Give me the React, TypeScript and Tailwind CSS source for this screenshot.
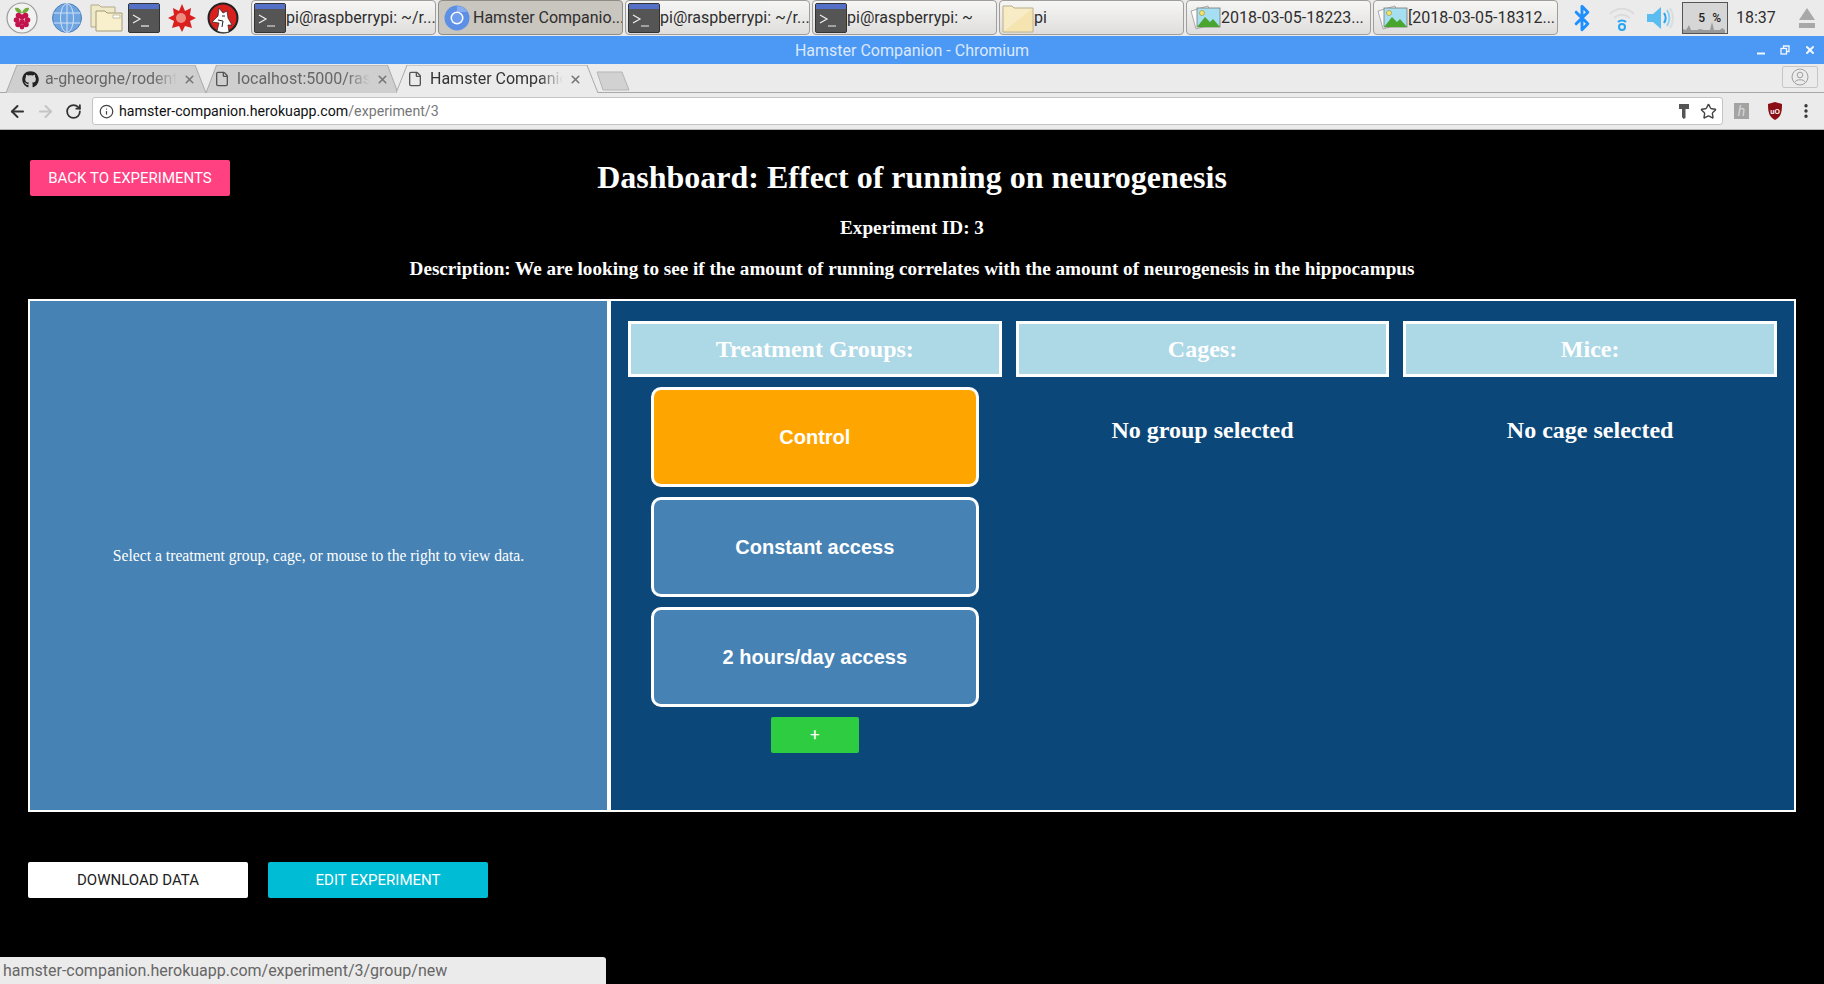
import { ArrowLeft, ArrowRight, Bluetooth, EllipsisVertical, File, Info, RotateCw, Star, X } from 'lucide-react'
import { FaGithub } from 'react-icons/fa'

function RaspberryIcon() {
  return (
    <svg width="32" height="32" viewBox="0 0 32 32">
      <circle cx="16" cy="16" r="15" fill="#f2f2f2" stroke="#9a9a9a" strokeWidth="1.2" />
      <path d="M16 11c-1-4-4-6-7-5 0 3 3 6 7 5zM16 11c1-4 4-6 7-5 0 3-3 6-7 5z" fill="#6fae3c" />
      <g fill="#c2134d">
        <circle cx="12.5" cy="13.5" r="2.8" />
        <circle cx="19.5" cy="13.5" r="2.8" />
        <circle cx="16" cy="15" r="2.8" />
        <circle cx="10.5" cy="18" r="2.8" />
        <circle cx="21.5" cy="18" r="2.8" />
        <circle cx="16" cy="20" r="2.8" />
        <circle cx="12" cy="22.5" r="2.8" />
        <circle cx="20" cy="22.5" r="2.8" />
        <circle cx="16" cy="25" r="2.4" />
      </g>
    </svg>
  )
}

function GlobeIcon() {
  return (
    <svg width="32" height="32" viewBox="0 0 32 32">
      <circle cx="16" cy="16" r="14.5" fill="#6ea4e0" stroke="#4c7fba" />
      <g fill="none" stroke="#cfe2f7" strokeWidth="1">
        <ellipse cx="16" cy="16" rx="6.5" ry="14.5" />
        <path d="M16 1.5v29M2.5 11h27M2.5 21h27" />
      </g>
    </svg>
  )
}

function FolderIcon() {
  return (
    <svg width="34" height="32" viewBox="0 0 34 32">
      <path d="M1 3h8l2 2h14v20H1z" fill="#f0e9c8" stroke="#b3ab8a" />
      <path d="M6 9h9l2 2h15v18H6z" fill="#f8efcc" stroke="#a39a78" />
      <rect x="23" y="13" width="7" height="3" fill="#fff" stroke="#a39a78" strokeWidth="0.6" />
    </svg>
  )
}

function TerminalIcon() {
  return (
    <svg width="32" height="32" viewBox="0 0 32 32">
      <rect x="0.5" y="1.5" width="31" height="29" rx="1.5" fill="#555" stroke="#333" />
      <rect x="1" y="2" width="30" height="5" fill="#5470c6" />
      <path d="M5 13l7 4-7 4" fill="none" stroke="#eee" strokeWidth="1.2" />
      <path d="M13 24h8" stroke="#eee" strokeWidth="1.2" />
    </svg>
  )
}

function WolframIcon() {
  return (
    <svg width="30" height="30" viewBox="0 0 30 30">
      <path
        d="M15 1l3 7 6-3-1 7 6 3-6 3 2 7-7-2-3 6-3-6-7 2 2-7-6-3 6-3-1-7 6 3z"
        fill="#d9201f"
      />
      <circle cx="14" cy="15" r="5" fill="#ee8a80" />
    </svg>
  )
}

function WolfIcon() {
  return (
    <svg width="32" height="32" viewBox="0 0 32 32">
      <circle cx="16" cy="16" r="14.5" fill="#d8201f" stroke="#222" strokeWidth="2" />
      <path
        d="M12 6l4 5 4-2 1 7 4 7-4 0 1 7c-4 1-8 1-12-1l2-8-7-1 6-6z"
        fill="#fff"
        stroke="#222"
        strokeWidth="0.7"
      />
      <path d="M11 18l5 1-1 6M15 14l3 0" fill="none" stroke="#222" strokeWidth="1" />
    </svg>
  )
}

function ChromiumIcon() {
  return (
    <svg width="26" height="26" viewBox="0 0 26 26">
      <circle cx="13" cy="13" r="12.5" fill="#5c8fe6" />
      <path d="M13 1a12 12 0 0 1 10.4 6H13z" fill="#88aef0" />
      <circle cx="13" cy="13" r="6.5" fill="#fff" />
      <circle cx="13" cy="13" r="5" fill="#6f9cec" />
    </svg>
  )
}

function ImageIcon() {
  return (
    <svg width="32" height="28" viewBox="0 0 32 28">
      <path d="M2 7l17-5 5 18-17 5z" fill="#fafafa" stroke="#999" strokeWidth="0.8" />
      <rect x="8" y="4" width="23" height="19" fill="#a6dff2" stroke="#777" strokeWidth="0.8" />
      <circle cx="13" cy="9" r="2.5" fill="#f5e66a" stroke="#8c8a3c" strokeWidth="0.6" />
      <path d="M8 23l8-10 5 5 3-3 7 8z" fill="#4aa52e" />
    </svg>
  )
}

function TaskButton({ icon, label, active }: { icon: React.ReactNode; label: string; active?: boolean }) {
  return (
    <div
      className={
        active
          ? 'flex w-[185px] h-[35px] items-center overflow-hidden rounded-[4px] border border-[#8f8c86] bg-[#c9c5bf] pl-[1px]'
          : 'flex w-[185px] h-[35px] items-center overflow-hidden rounded-[4px] border border-[#a09e9a] bg-gradient-to-b from-[#f6f6f5] to-[#dfdedc] pl-[1px]'
      }
    >
      <span className="flex w-[33px] shrink-0 justify-center">{icon}</span>
      <span className="whitespace-nowrap text-[16px] text-[#2e2e2e]">{label}</span>
    </div>
  )
}

function BrowserTab({ icon, label, active, className, iconClass, closeClass }: {
  icon: React.ReactNode
  label: string
  active?: boolean
  className: string
  iconClass: string
  closeClass: string
}) {
  return (
    <div className={`relative flex h-[28px] items-center ${className}`}>
      <svg className="absolute inset-0 h-full w-full" viewBox="0 0 200 28" preserveAspectRatio="none">
        <path
          d="M0 28L11 0H189L200 28"
          fill={active ? '#ebebeb' : '#cfcfcf'}
          stroke="#a9a9a9"
          strokeWidth="1"
          vectorEffect="non-scaling-stroke"
        />
      </svg>
      <span className={`relative flex w-[20px] shrink-0 justify-center ${iconClass}`}>{icon}</span>
      <span
        className={`relative ml-[5px] flex-1 overflow-hidden whitespace-nowrap text-[16px] [mask-image:linear-gradient(to_right,black_82%,transparent)] ${
          active ? 'text-[#333]' : 'text-[#666]'
        }`}
      >
        {label}
      </span>
      <X className={`relative ml-[6px] shrink-0 text-[#777] ${closeClass}`} size={13} strokeWidth={3} />
    </div>
  )
}

function GroupButton({ label, selected }: { label: string; selected?: boolean }) {
  return (
    <button
      className={`h-[100px] w-[328px] rounded-[10px] border-[3px] border-white font-['Liberation_Sans',sans-serif] text-[20px] font-bold text-white ${
        selected ? 'bg-[#ffa500]' : 'bg-[#4682b4]'
      }`}
    >
      {label}
    </button>
  )
}

function ColumnHeader({ label }: { label: string }) {
  return (
    <div className="flex h-[56px] items-center justify-center border-[3px] border-white bg-[#add8e6] text-[24px] font-bold text-white">
      {label}
    </div>
  )
}

export default function App() {
  return (
    <div className="relative flex h-[984px] w-[1824px] flex-col overflow-hidden bg-black font-['Liberation_Serif',serif]">

      {/* Desktop panel */}
      <div className="flex h-[36px] shrink-0 items-start bg-[#ebebeb] font-['Roboto',sans-serif]">
        <div className="flex h-[36px] w-[251px] shrink-0 items-center pl-[6px]">
          <span className="w-[45px]"><RaspberryIcon /></span>
          <span className="w-[39px]"><GlobeIcon /></span>
          <span className="w-[38px]"><FolderIcon /></span>
          <span className="w-[39px]"><TerminalIcon /></span>
          <span className="w-[40px]"><WolframIcon /></span>
          <WolfIcon />
        </div>
        <div className="flex gap-[2px]">
          <TaskButton icon={<TerminalIcon />} label="pi@raspberrypi: ~/r..." />
          <TaskButton active icon={<ChromiumIcon />} label="Hamster Companio..." />
          <TaskButton icon={<TerminalIcon />} label="pi@raspberrypi: ~/r..." />
          <TaskButton icon={<TerminalIcon />} label="pi@raspberrypi: ~" />
          <TaskButton
            icon={
              <svg width="32" height="30" viewBox="0 0 32 30">
                <path d="M1 3h9l2 2h19v24H1z" fill="#f7ecc6" stroke="#b9ae87" />
                <path d="M2 28L30 6v22z" fill="#f5e4b0" />
              </svg>
            }
            label="pi"
          />
          <TaskButton icon={<ImageIcon />} label="2018-03-05-18223..." />
          <TaskButton icon={<ImageIcon />} label="[2018-03-05-18312..." />
        </div>
        <div className="flex h-[36px] flex-1 items-center pl-[10px]">
          <Bluetooth className="shrink-0 text-[#1e8fff]" size={28} strokeWidth={2.5} />
          <svg className="ml-[12px] shrink-0" width="28" height="28" viewBox="0 0 28 28" fill="none">
            <path d="M2 10c7-7 17-7 24 0M6 14c5-4 11-4 16 0" stroke="#dcdcdc" strokeWidth="2" />
            <path d="M10 18c2-2 6-2 8 0" stroke="#27a4f2" strokeWidth="2" />
            <circle cx="14" cy="23" r="3" stroke="#27a4f2" strokeWidth="2" />
          </svg>
          <svg className="ml-[10px] shrink-0" width="28" height="28" viewBox="0 0 28 28" fill="none">
            <path d="M1 10h6l8-7v22l-8-7H1z" fill="#5bbcf2" />
            <path d="M18 9c2 3 2 7 0 10" stroke="#27a4f2" strokeWidth="2" />
            <path d="M21 6c3 5 3 11 0 16" stroke="#8fd0f5" strokeWidth="2" />
            <path d="M24 4c4 6 4 14 0 20" stroke="#dcdcdc" strokeWidth="2" />
          </svg>
          <div className="relative ml-[8px] h-[32px] w-[46px] shrink-0 border border-[#555] bg-[#d6d6d6]">
            <span className="absolute right-[4px] top-[6px] text-[12px] font-medium tracking-[2px] text-[#222]">5 %</span>
            <svg className="absolute bottom-0 left-0" width="44" height="12" viewBox="0 0 44 12">
              <path d="M0 12V8l3 1 3-5 2 5h6l3-1 4 1h6l2-8 2 8h6l2-2 3 2v3z" fill="#9a9a9a" />
            </svg>
          </div>
          <span className="ml-[8px] text-[16px] text-[#2e2e2e]">18:37</span>
          <svg className="ml-[22px] shrink-0" width="18" height="22" viewBox="0 0 18 22">
            <path d="M9 1l8 12H1z" fill="#a8a8a8" />
            <rect x="1" y="16" width="16" height="5" fill="#a8a8a8" />
          </svg>
        </div>
      </div>

      {/* Window title */}
      <div className="relative flex h-[28px] shrink-0 items-center justify-center bg-[#4c98f5] pt-[1px] font-['Roboto',sans-serif] text-[16px] text-[#dbe9fc]">
        Hamster Companion - Chromium
        <div className="absolute right-[8px] top-0 flex h-[28px] items-center gap-[14px]">
          <svg width="10" height="10" viewBox="0 0 10 10"><path d="M1 8.5h8" stroke="#f2f7fe" strokeWidth="2" /></svg>
          <svg width="10" height="10" viewBox="0 0 10 10" fill="none" stroke="#f2f7fe" strokeWidth="1.3">
            <rect x="1" y="3.5" width="5.5" height="5.5" />
            <path d="M3.5 3.5V1H9v5.5H6.5" />
          </svg>
          <X className="text-[#f2f7fe]" size={12} strokeWidth={4} />
        </div>
      </div>

      {/* Tab strip */}
      <div className="relative flex h-[29px] shrink-0 border-b border-[#a9a9a9] bg-[#ebebeb] pl-[6px] font-['Roboto',sans-serif]">
        <BrowserTab
          className="w-[200px] mt-[1px]"
          iconClass="ml-[14px]"
          closeClass="mr-[10px]"
          icon={<FaGithub className="text-[#222]" size={17} />}
          label="a-gheorghe/rodent-tracker"
        />
        <BrowserTab
          className="w-[192px] mt-[1px]"
          iconClass="ml-[6px]"
          closeClass="mr-[9px]"
          icon={<File className="text-[#555]" size={16} />}
          label="localhost:5000/raspberry"
        />
        <BrowserTab
          active
          className="-ml-[2px] w-[202px] mt-[1px]"
          iconClass="ml-[9px]"
          closeClass="mr-[16px]"
          icon={<File className="text-[#555]" size={16} />}
          label="Hamster Companion"
        />
        <svg className="mt-[7px] -ml-[2px]" width="34" height="20" viewBox="0 0 34 20">
          <path d="M1 1H26L33 19H7z" fill="#d2d2d2" stroke="#b5b5b5" />
        </svg>
        <div className="absolute right-[6px] top-[2px] flex h-[22px] w-[36px] items-center justify-center rounded-[2px] border border-[#c6c6c6]">
          <svg width="18" height="18" viewBox="0 0 18 18" fill="none" stroke="#a0a0a0">
            <circle cx="9" cy="9" r="8" />
            <circle cx="9" cy="7" r="2.8" />
            <path d="M4 14c1-3 9-3 10 0" />
          </svg>
        </div>
      </div>

      {/* Toolbar */}
      <div className="flex h-[37px] shrink-0 items-center border-b border-[#b5b5b5] bg-[#ebebeb] font-['Roboto',sans-serif]">
        <div className="flex w-[92px] shrink-0 items-center pl-[8px]">
          <ArrowLeft className="text-[#333]" size={19} strokeWidth={2.5} />
          <ArrowRight className="ml-[9px] text-[#c4c4c4]" size={19} strokeWidth={2.5} />
          <RotateCw className="ml-[10px] text-[#333]" size={17} strokeWidth={2.5} />
        </div>
        <div className="flex h-[28px] w-[1631px] items-center rounded-[3px] border border-[#c4c4c4] bg-white pl-[6px] pr-[5px]">
          <Info className="text-[#444]" size={15} strokeWidth={2} />
          <span className="ml-[5px] pt-[1px] text-[14.2px] text-[#111]">
            hamster-companion.herokuapp.com<span className="text-[#777]">/experiment/3</span>
          </span>
          <svg className="ml-auto" width="12" height="18" viewBox="0 0 12 18">
            <path d="M1 2h10v5H7.5v9l-2 1-1.500-2V7H1z" fill="#555" />
          </svg>
          <Star className="ml-[10px] text-[#444]" size={17} strokeWidth={2} />
        </div>
        <span className="ml-[11px] flex h-[16px] w-[15px] items-center justify-center bg-[#a3a3a3] text-[14px] italic text-[#d8d8d8]">h</span>
        <svg className="ml-[18px]" width="16" height="18" viewBox="0 0 16 18">
          <path d="M8 0l7 2c0 8-1 13-7 16C2 15 1 10 1 2z" fill="#8b0f14" />
          <text x="8" y="11.5" textAnchor="middle" fontSize="7" fontWeight="700" fill="#fff" fontFamily="Liberation Sans">uO</text>
        </svg>
        <EllipsisVertical className="ml-[14px] text-[#333]" size={18} strokeWidth={2.5} />
      </div>

      {/* Page */}
      <div className="flex flex-1 flex-col px-[28px] text-white">
        <div className="grid grid-cols-[1fr_auto_1fr] items-start pt-[30px]">
          <button className="ml-[2px] h-[36px] w-[200px] rounded-[2px] bg-[#ff4081] font-['Roboto',sans-serif] text-[15px] text-white">
            BACK TO EXPERIMENTS
          </button>
          <h1 className="-mt-[1px] text-center text-[32px] leading-[36px] font-bold">Dashboard: Effect of running on neurogenesis</h1>
        </div>
        <p className="mt-[21px] text-center text-[19.2px] leading-[22px] font-bold">Experiment ID: 3</p>
        <p className="mt-[19px] text-center text-[19.17px] leading-[22px] font-bold">
          Description: We are looking to see if the amount of running correlates with the amount of neurogenesis in the hippocampus
        </p>

        <div className="mt-[19px] flex h-[513px] w-[1768px] border-2 border-white">
          <div className="flex w-[577px] items-center justify-center bg-[#4682b4] text-[15.65px]">
            Select a treatment group, cage, or mouse to the right to view data.
          </div>
          <div className="w-[4px] bg-white" />
          <div className="grid flex-1 grid-cols-3 gap-[14px] bg-[#0b4779] pl-[17px] pr-[17px] pt-[20px]">
            <div className="flex flex-col items-center">
              <div className="w-full"><ColumnHeader label="Treatment Groups:" /></div>
              <div className="mt-[10px] flex flex-col gap-[10px]">
                <GroupButton selected label="Control" />
                <GroupButton label="Constant access" />
                <GroupButton label="2 hours/day access" />
              </div>
              <button className="mt-[10px] h-[36px] w-[88px] rounded-[2px] bg-[#2ecc40] font-['Roboto',sans-serif] text-[17px] text-white">+</button>
            </div>
            <div>
              <ColumnHeader label="Cages:" />
              <p className="mt-[39px] text-center text-[24px] leading-[28px] font-bold">No group selected</p>
            </div>
            <div>
              <ColumnHeader label="Mice:" />
              <p className="mt-[39px] text-center text-[24px] leading-[28px] font-bold">No cage selected</p>
            </div>
          </div>
        </div>

        <div className="mt-[50px] flex gap-[20px] font-['Roboto',sans-serif] text-[15px]">
          <button className="h-[36px] w-[220px] rounded-[2px] bg-white text-[#222]">DOWNLOAD DATA</button>
          <button className="h-[36px] w-[220px] rounded-[2px] bg-[#00bcd4] text-white">EDIT EXPERIMENT</button>
        </div>
      </div>

      {/* Link status bubble */}
      <div className="absolute bottom-0 left-0 flex h-[27px] w-[606px] items-center rounded-tr-[3px] bg-[#ebebeb] pl-[3px] font-['Roboto',sans-serif] text-[16px] text-[#666]">
        hamster-companion.herokuapp.com/experiment/3/group/new
      </div>
    </div>
  )
}
